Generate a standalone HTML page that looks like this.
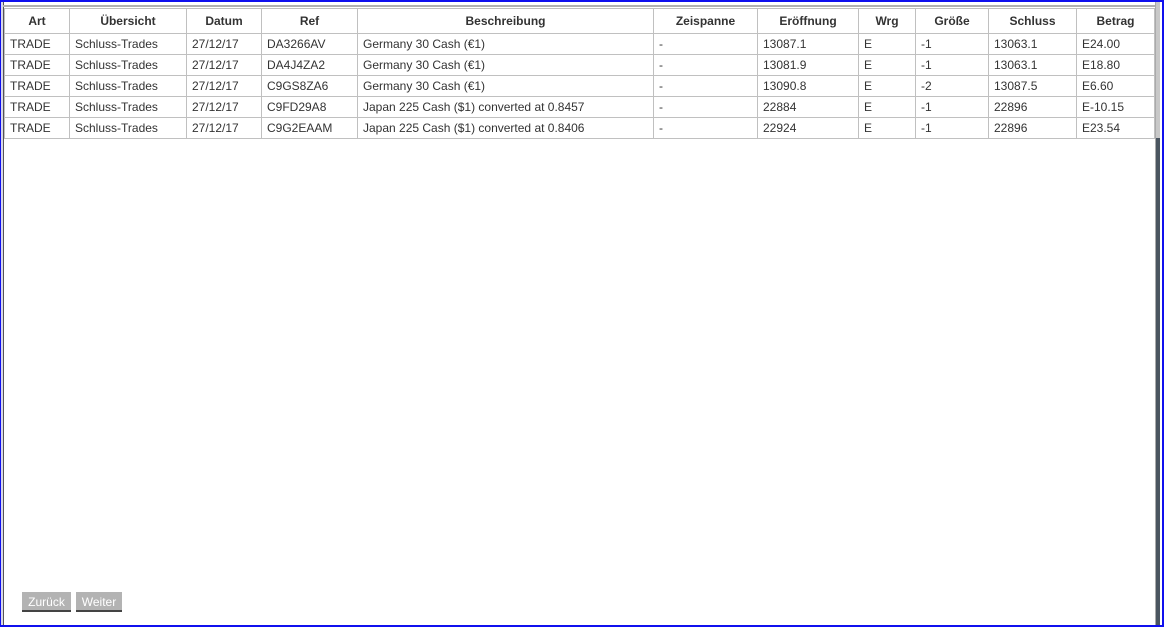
<!DOCTYPE html>
<html><head><meta charset="utf-8"><style>
body{margin:0;width:1164px;height:627px;overflow:hidden;background:#fff;position:relative;font-family:"Liberation Sans",Arial,sans-serif;font-size:12px;color:#333}
.b{position:absolute}
table{position:absolute;left:4px;top:8px;border-collapse:collapse;table-layout:fixed;width:1150px}
td,th{border:1px solid #c0c0c0;height:20px;padding:0 0 0 5px;white-space:nowrap;overflow:hidden;text-align:left;font-weight:normal}
th{height:24px;text-align:center;font-weight:bold;padding:0}
.btn{position:absolute;top:592px;height:20px;background:#b3b3b3;color:#fff;font-size:12px;line-height:20px;text-align:center;border-bottom:2px solid #444;box-sizing:border-box}
</style></head><body>
<div class="b" style="left:0;top:0;width:1164px;height:2px;background:#1010ee"></div>
<div class="b" style="left:0;top:625px;width:1164px;height:2px;background:#1010ee"></div>
<div class="b" style="left:0;top:0;width:1px;height:627px;background:#1010ee"></div>
<div class="b" style="left:1162px;top:0;width:2px;height:627px;background:#1010ee"></div>
<div class="b" style="left:1px;top:2px;width:2px;height:623px;background:#d8d8e8"></div>
<div class="b" style="left:3px;top:2px;width:1px;height:623px;background:#555"></div>
<div class="b" style="left:3px;top:5px;width:1152px;height:2px;background:#b0b0b0"></div>
<div class="b" style="left:1155px;top:2px;width:1px;height:623px;background:#aaa"></div>
<div class="b" style="left:1156px;top:2px;width:4px;height:136px;background:#c8c8c8"></div>
<div class="b" style="left:1156px;top:138px;width:4px;height:487px;background:#4a5560"></div>
<table>
<colgroup><col style="width:65px"><col style="width:117px"><col style="width:75px"><col style="width:96px"><col style="width:296px"><col style="width:104px"><col style="width:101px"><col style="width:57px"><col style="width:73px"><col style="width:88px"><col style="width:78px"></colgroup>
<tr><th>Art</th><th>Übersicht</th><th>Datum</th><th>Ref</th><th>Beschreibung</th><th>Zeispanne</th><th>Eröffnung</th><th>Wrg</th><th>Größe</th><th>Schluss</th><th>Betrag</th></tr>
<tr><td>TRADE</td><td>Schluss-Trades</td><td>27/12/17</td><td>DA3266AV</td><td>Germany 30 Cash (€1)</td><td>-</td><td>13087.1</td><td>E</td><td>-1</td><td>13063.1</td><td>E24.00</td></tr>
<tr><td>TRADE</td><td>Schluss-Trades</td><td>27/12/17</td><td>DA4J4ZA2</td><td>Germany 30 Cash (€1)</td><td>-</td><td>13081.9</td><td>E</td><td>-1</td><td>13063.1</td><td>E18.80</td></tr>
<tr><td>TRADE</td><td>Schluss-Trades</td><td>27/12/17</td><td>C9GS8ZA6</td><td>Germany 30 Cash (€1)</td><td>-</td><td>13090.8</td><td>E</td><td>-2</td><td>13087.5</td><td>E6.60</td></tr>
<tr><td>TRADE</td><td>Schluss-Trades</td><td>27/12/17</td><td>C9FD29A8</td><td>Japan 225 Cash ($1) converted at 0.8457</td><td>-</td><td>22884</td><td>E</td><td>-1</td><td>22896</td><td>E-10.15</td></tr>
<tr><td>TRADE</td><td>Schluss-Trades</td><td>27/12/17</td><td>C9G2EAAM</td><td>Japan 225 Cash ($1) converted at 0.8406</td><td>-</td><td>22924</td><td>E</td><td>-1</td><td>22896</td><td>E23.54</td></tr>
</table>
<div class="btn" style="left:22px;width:49px">Zurück</div>
<div class="btn" style="left:76px;width:46px">Weiter</div>
</body></html>
